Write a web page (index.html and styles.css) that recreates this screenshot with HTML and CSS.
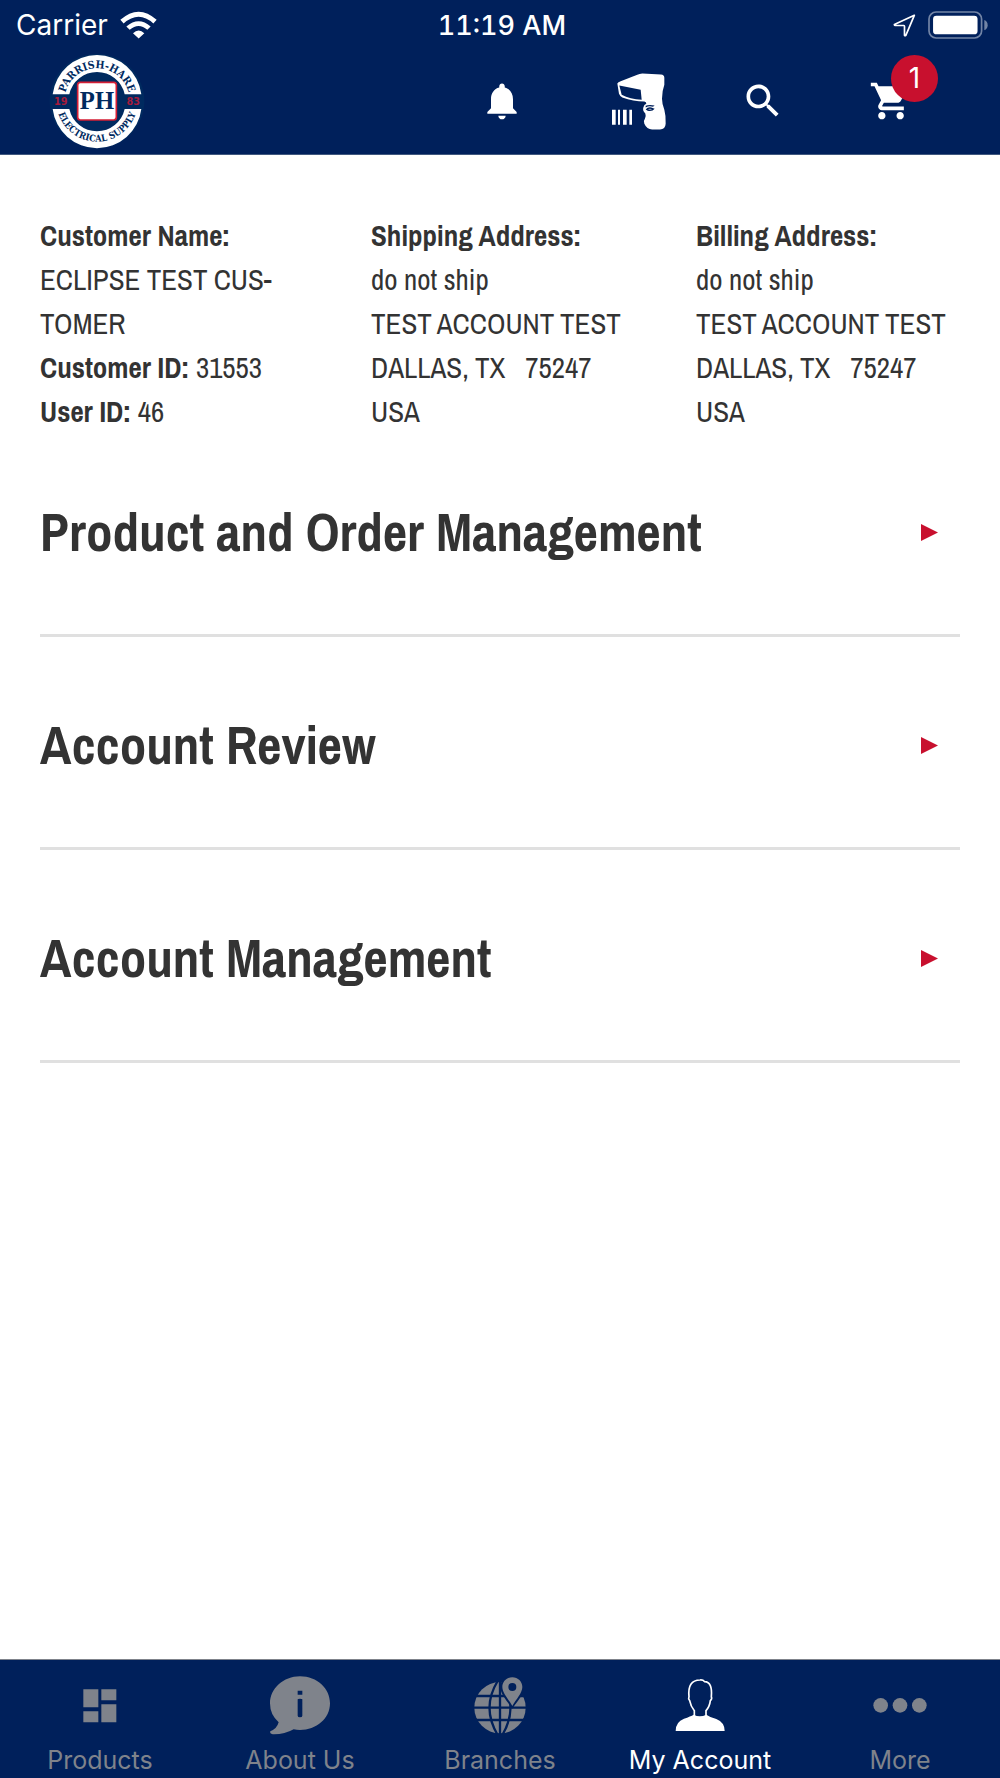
FILE: index.html
```html
<!DOCTYPE html>
<html lang="en">
<head>
<meta charset="utf-8">
<meta name="viewport" content="width=device-width, initial-scale=1">
<title>My Account</title>
<link rel="stylesheet" href="styles.css">
</head>
<body>
<div class="app">
  <header class="top">
    <div class="status">
      <div class="status-left">
        <span>Carrier</span>
        <svg class="wifi" viewBox="360 29 111 83" aria-hidden="true"><path d="M361 55Q416 6 470 55L460 66Q416 26 371 66ZM379 75Q416 43 452 75L442 85Q416 62 389 85ZM399 95Q416 79 433 95L416 111Z"/></svg>
      </div>
      <span class="time">11:19 AM</span>
      <div class="status-right">
        <svg class="location" viewBox="579 41 68 68" aria-hidden="true"><path d="M642 45L583 72Q583 75 586 75H611Q613 75 613 78V104Q615 106 617 104Z"/></svg>
        <svg class="battery" viewBox="684 31 178 83" aria-hidden="true"><rect class="shell" x="687" y="34" width="156" height="77" rx="21"/><rect x="699" y="45" width="132" height="55" rx="10"/><path class="nub" d="M851 58Q861 62 861 73T851 88Z"/></svg>
      </div>
    </div>
    <div class="toolbar">
      <a class="logo" href="#home" aria-label="Parrish-Hare Electrical Supply">
        <svg viewBox="146 159 288 288">
          <defs>
            <path id="arc-top" d="M192 303A98 98 0 0 1 388 303"/>
            <path id="arc-bottom" d="M168 303A122 122 0 0 0 412 303"/>
          </defs>
          <circle class="logo-navy" cx="290" cy="303" r="142"/>
          <path class="logo-white" d="M157 283A134 134 0 0 1 423 283H373A85 85 0 0 0 207 283ZM157 327A134 134 0 0 0 423 327H373A85 85 0 0 1 207 327Z"/>
          <rect class="logo-frame" x="232" y="247" width="116" height="113" rx="8"/>
          <text class="logo-ring top-text"><textPath href="#arc-top" startOffset="50%">PARRISH-HARE</textPath></text>
          <text class="logo-ring bottom-text"><textPath href="#arc-bottom" startOffset="50%">ELECTRICAL SUPPLY</textPath></text>
          <text class="logo-year" x="181" y="314">19</text>
          <text class="logo-year" x="399" y="314">83</text>
          <text class="logo-mono" x="290" y="328">PH</text>
        </svg>
      </a>
      <nav class="actions" aria-label="Tools">
        <button type="button" aria-label="Notifications"><svg class="icon" viewBox="0 0 24 24"><path d="M12 22c1.1 0 2-.9 2-2h-4c0 1.1.9 2 2 2zm6-6v-5c0-3.070-1.640-5.640-4.500-6.320V4c0-.83-.67-1.500-1.500-1.500s-1.500.67-1.500 1.500v.68C7.630 5.360 6 7.920 6 11v5l-2 2v1h16v-1l-2-2z"/></svg></button>
        <button type="button" aria-label="Scan barcode"><svg class="scanner" viewBox="636 218 162 170"><path fill-rule="evenodd" d="M652 249Q654 245 662 242L712 223Q718 220 727 219L783 222Q793 223 793 232V253Q786 272 786 295Q786 310 793 328Q798 346 797 370Q796 387 780 387H758Q741 388 733 370Q729 362 735 354Q739 349 736 339Q727 331 730 321Q732 312 739 310Q739 304 733 303Q700 303 667 291Q660 288 657 280ZM658 255L665 283Q690 296 725 298L722 268ZM737 316Q747 311 764 315L759 319Q747 315 737 321ZM737 327Q743 319 754 321L764 325Q757 334 743 331ZM744 326Q750 328 756 326Q750 323 744 326Z"/><path d="M636 328h11v45h-11zM654 328h6v45h-6zM669 328h11v45h-11zM688 328h8v45h-8z"/></svg></button>
        <button type="button" aria-label="Search"><svg class="icon" viewBox="0 0 24 24"><path d="M15.500 14h-.79l-.28-.27C15.410 12.590 16 11.110 16 9.500 16 5.910 13.090 3 9.500 3S3 5.910 3 9.500 5.910 16 9.500 16c1.610 0 3.090-.59 4.230-1.570l.27.28v.79l5 4.990L20.490 19l-4.990-5zm-6 0C7.010 14 5 11.990 5 9.500S7.010 5 9.500 5 14 7.010 14 9.500 11.990 14 9.500 14z"/></svg></button>
        <button type="button" class="cart" aria-label="Cart, 1 item"><svg class="icon" viewBox="0 0 24 24"><path d="M7 18c-1.100 0-1.990.9-1.990 2S5.900 22 7 22s2-.9 2-2-.9-2-2-2zM1 2v2h2l3.600 7.590-1.350 2.450c-.16.28-.25.61-.25.96 0 1.100.9 2 2 2h12v-2H7.420c-.14 0-.25-.11-.25-.25l.03-.12.9-1.630h7.450c.75 0 1.410-.41 1.750-1.030l3.580-6.490c.08-.14.12-.31.12-.48 0-.55-.45-1-1-1H5.210l-.94-2H1zm16 16c-1.100 0-1.990.9-1.990 2s.89 2 1.990 2 2-.9 2-2-.9-2-2-2z"/></svg><span class="badge">1</span></button>
      </nav>
    </div>
  </header>

  <main class="content">
    <section class="details">
      <div class="customer">
        <strong>Customer Name:</strong><br>
        ECLIPSE TEST CUS&shy;TOMER<br>
        <strong>Customer ID:</strong> 31553<br>
        <strong>User ID:</strong> 46
      </div>
      <div>
        <strong>Shipping Address:</strong><br>
        do not ship<br>
        TEST ACCOUNT TEST<br>
        DALLAS, TX &nbsp; 75247<br>
        USA
      </div>
      <div>
        <strong>Billing Address:</strong><br>
        do not ship<br>
        TEST ACCOUNT TEST<br>
        DALLAS, TX &nbsp; 75247<br>
        USA
      </div>
    </section>
    <section class="sections">
      <h2><button type="button" aria-expanded="false">Product and Order Management<svg class="arrow" viewBox="0 0 17 17" aria-hidden="true"><path d="M0 0L17 8.500L0 17Z"/></svg></button></h2>
      <h2><button type="button" aria-expanded="false">Account Review<svg class="arrow" viewBox="0 0 17 17" aria-hidden="true"><path d="M0 0L17 8.500L0 17Z"/></svg></button></h2>
      <h2><button type="button" aria-expanded="false">Account Management<svg class="arrow" viewBox="0 0 17 17" aria-hidden="true"><path d="M0 0L17 8.500L0 17Z"/></svg></button></h2>
    </section>
  </main>

  <nav class="tabs" aria-label="Main">
    <a href="#products"><svg viewBox="0 0 180 180"><path d="M40 40h45v54H40zM94 40h45v33H94zM40 106h45v33H40zM94 85h45v54H94z"/></svg>Products</a>
    <a href="#about"><svg viewBox="0 0 180 180"><path fill-rule="evenodd" d="M90 1C142 1 180 38 180 82C180 128 139 162 90 162Q80 162 71 160Q43 176 8 175Q-2 172 1 166Q21 158 26 139Q0 116 0 82C0 38 40 1 90 1ZM83 44V56H97V44ZM83 70V119Q83 124 90 124T97 119V70Q97 68 90 68T83 70Z"/></svg>About Us</a>
    <a href="#branches"><svg viewBox="0 0 180 180"><mask id="grid"><rect width="180" height="180" fill="#fff"/><g fill="none" stroke="#000" stroke-width="7"><path d="M90 10V174M10 60H174M10 95H172M10 132H172M83 15Q34 95 83 177M97 15Q146 95 97 177"/></g><path fill="#000" d="M127 -2C106 -2 91 14 91 33C91 54 111 75 127 98C143 75 163 54 163 33C163 14 148 -2 127 -2Z"/></mask><circle cx="90" cy="95" r="77" mask="url(#grid)"/><path fill-rule="evenodd" d="M127 4C110 4 97 17 97 33C97 51 116 70 127 90C138 70 157 51 157 33C157 17 144 4 127 4ZM127 21A12 12 0 1 1 127 45A12 12 0 1 1 127 21Z"/></svg>Branches</a>
    <a href="#account" class="active" aria-current="page"><svg viewBox="0 0 180 180"><path d="M17 165Q17 137 42 128Q62 121 71 116Q89 126 109 116Q120 124 139 129Q164 139 164 165Z"/><path class="outline" d="M73 121V104Q62 91 59 74Q54 69 57 62Q52 12 90 12Q99 11 104 17Q128 18 124 62Q127 69 121 74Q119 92 108 104V121"/></svg>My Account</a>
    <a href="#more"><svg viewBox="0 0 180 180"><circle cx="32" cy="88" r="22"/><circle cx="90" cy="88" r="22"/><circle cx="148" cy="88" r="22"/></svg>More</a>
  </nav>
</div>
</body>
</html>
```
FILE: styles.css
```css
:root {
  --navy: #00205b;
  --red: #c8102e;
  --text: #333;
  --muted: #7f838b;
}

* { box-sizing: border-box; }

body {
  margin: 0;
  background: #fff;
  color: var(--text);
  font-family: "Liberation Sans Narrow", "Archivo Narrow", "Arial Narrow", "Liberation Sans", sans-serif;
}

button {
  padding: 0;
  border: 0;
  background: none;
  color: inherit;
  font: inherit;
  cursor: pointer;
}

svg {
  display: block;
  fill: currentColor;
}

.app {
  display: flex;
  flex-direction: column;
  min-height: 100vh;
}

/* Status bar and toolbar */
.top {
  background: var(--navy);
  border-bottom: 1px solid #40587f;
  color: #fff;
  font-family: Inter, "Liberation Sans", sans-serif;
}

.status {
  display: grid;
  grid-template-columns: 1fr auto 1fr;
  align-items: center;
  height: 50px;
  padding: 0 12px 0 16px;
  font-size: 28px;
}

.status-left,
.status-right {
  display: flex;
  align-items: center;
  gap: 12px;
}

.status-right { justify-content: flex-end; }
.time { font-size: 27px; font-weight: 500; font-variant-numeric: tabular-nums; }
.wifi { width: 37px; height: 28px; }
.location { width: 23px; height: 23px; }
.location path { fill: none; stroke: currentColor; stroke-width: 5; stroke-linejoin: round; }
.battery { width: 60px; height: 28px; }
.battery .shell { fill: none; stroke: #7385a6; stroke-width: 5; }
.battery .nub { fill: #7385a6; }

.toolbar {
  display: flex;
  justify-content: space-between;
  align-items: center;
  height: 104px;
  padding: 0 87px 2px 49px;
}

.logo svg { width: 96px; height: 96px; }
.logo-navy { fill: #002a5f; }
.logo-white { fill: #fff; }
.logo-frame { fill: #fff; stroke: #d51f35; stroke-width: 5; }
.logo text { fill: #002a5f; text-anchor: middle; font-weight: bold; }
.logo-ring { font-family: "DejaVu Serif Condensed", "DejaVu Serif", serif; }
.logo .top-text { font-size: 32px; }
.logo .bottom-text { font-size: 28px; }
.logo .logo-year { fill: #a51c3c; font-family: "DejaVu Sans", sans-serif; font-size: 29px; }
.logo .logo-mono { font-family: "Liberation Serif", serif; font-size: 74px; }

.actions {
  display: grid;
  grid-template-columns: 132px 129px 128px 44px;
  align-items: center;
  justify-items: start;
}

.icon { width: 44px; height: 44px; }
.scanner { width: 54px; height: 57px; }
.cart { position: relative; }

.badge {
  position: absolute;
  top: -24px;
  left: 22px;
  width: 47px;
  height: 47px;
  border-radius: 50%;
  background: var(--red);
  font-size: 28px;
  line-height: 47px;
  text-align: center;
}

/* Account details */
.content {
  flex: 1;
  padding: 59px 40px;
}

.details {
  display: grid;
  grid-template-columns: 331fr 325fr 264fr;
  font-size: 29px;
  line-height: 44px;
}

.customer { padding-right: 80px; }

/* Expandable sections */
.sections {
  display: grid;
  gap: 13px;
  margin-top: 3px;
}

.sections h2 {
  margin: 0;
  border-bottom: 3px solid #e0e0e0;
  font-size: 53px;
  line-height: 64px;
}

.sections button {
  display: flex;
  justify-content: space-between;
  align-items: center;
  width: 100%;
  padding: 63px 22px 70px 0;
  text-align: left;
}

.arrow {
  width: 17px;
  height: 17px;
  color: var(--red);
}

/* Bottom tab bar */
.tabs {
  display: grid;
  grid-template-columns: repeat(5, 1fr);
  height: 119px;
  padding-top: 16px;
  border-top: 1px solid #7f838b;
  background: var(--navy);
  font-family: Inter, "Liberation Sans", sans-serif;
  font-size: 25px;
  line-height: 30px;
}

.tabs a {
  display: flex;
  flex-direction: column;
  align-items: center;
  gap: 9px;
  color: var(--muted);
  text-decoration: none;
}

.tabs svg { width: 60px; height: 60px; }
.tabs .outline { fill: none; stroke: currentColor; stroke-width: 5; }
.tabs .active { color: #fff; }
```
